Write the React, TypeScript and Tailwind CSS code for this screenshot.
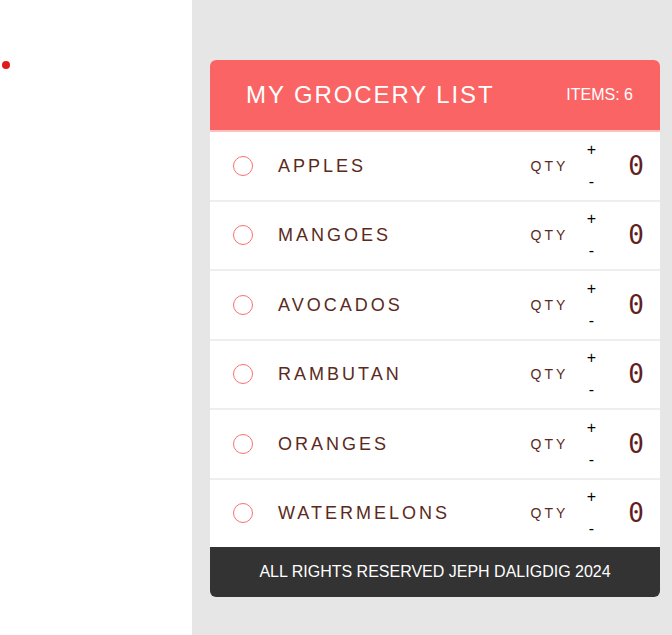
import React from "react";

const items = ["APPLES", "MANGOES", "AVOCADOS", "RAMBUTAN", "ORANGES", "WATERMELONS"];

export default function App() {
  return (
    <div
      className="flex h-[635px] w-[672px] overflow-hidden"
      style={{ fontFamily: '"Liberation Sans", Arial, sans-serif' }}
    >
      <div className="w-[192px] h-full bg-white pt-[61px] pl-[2px]">
        <div className="w-[8px] h-[8px] rounded-full bg-[#e01b1b]" />
      </div>
      <div className="flex-1 h-full bg-[#e6e6e6] pt-[60px] pl-[18px] pr-[12px]">
        <div className="w-[450px] rounded-[6px] overflow-hidden bg-white">
          <div className="h-[70px] bg-[#fa6464] flex items-center justify-between pl-[36px] pr-[27px] border-b-2 border-[#ffc0c0] box-content">
            <span className="text-white text-[24px] tracking-[1.9px] leading-none">MY GROCERY LIST</span>
            <span className="text-white text-[16px] leading-none">ITEMS: 6</span>
          </div>
          {items.map((name, i) => (
            <div
              key={name}
              className={`h-[67.5px] flex items-center pl-[23px] pr-[16px] bg-white box-content ${i < items.length - 1 ? "border-b-2 border-[#eeeeee]" : ""}`}
            >
              <div className="w-[20px] h-[20px] rounded-full border border-[#f87171]" />
              <span className="ml-[25px] text-[18px] tracking-[3px] text-[#5a2a20] leading-none">{name}</span>
              <span className="ml-auto text-[14px] tracking-[3px] text-[#5a2a20] leading-none">QTY</span>
              <div className="ml-[16px] flex flex-col items-center text-black text-[16px] leading-none gap-[16px] w-[14px]">
                <span>+</span>
                <span>-</span>
              </div>
              <span
                className="ml-[30px] text-[26px] text-[#5e2020] leading-none"
                style={{ fontFamily: '"DejaVu Sans Mono", monospace' }}
              >
                0
              </span>
            </div>
          ))}
          <div className="h-[50px] bg-[#333333] flex items-center justify-center">
            <span className="text-white text-[16px] leading-none">ALL RIGHTS RESERVED JEPH DALIGDIG 2024</span>
          </div>
        </div>
      </div>
    </div>
  );
}
